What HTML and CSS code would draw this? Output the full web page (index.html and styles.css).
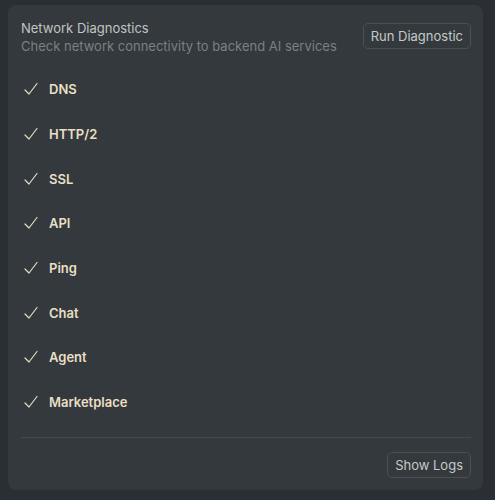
FILE: index.html
```html
<!DOCTYPE html>
<html>
<head>
<meta charset="utf-8">
<link rel="stylesheet" href="styles.css">
</head>
<body>
<div class="card">
  <div class="header">
    <div class="titles">
      <div class="title">Network Diagnostics</div>
      <div class="subtitle">Check network connectivity to backend AI services</div>
    </div>
    <button class="btn">Run Diagnostic</button>
  </div>
  <ul class="checks">
    <li class="row"><svg class="check" viewBox="0 0 14 14"><path d="M1 8 L5 12 L13 1.5"/></svg><span>DNS</span></li>
    <li class="row"><svg class="check" viewBox="0 0 14 14"><path d="M1 8 L5 12 L13 1.5"/></svg><span>HTTP/2</span></li>
    <li class="row"><svg class="check" viewBox="0 0 14 14"><path d="M1 8 L5 12 L13 1.5"/></svg><span>SSL</span></li>
    <li class="row"><svg class="check" viewBox="0 0 14 14"><path d="M1 8 L5 12 L13 1.5"/></svg><span>API</span></li>
    <li class="row"><svg class="check" viewBox="0 0 14 14"><path d="M1 8 L5 12 L13 1.5"/></svg><span>Ping</span></li>
    <li class="row"><svg class="check" viewBox="0 0 14 14"><path d="M1 8 L5 12 L13 1.5"/></svg><span>Chat</span></li>
    <li class="row"><svg class="check" viewBox="0 0 14 14"><path d="M1 8 L5 12 L13 1.5"/></svg><span>Agent</span></li>
    <li class="row"><svg class="check" viewBox="0 0 14 14"><path d="M1 8 L5 12 L13 1.5"/></svg><span>Marketplace</span></li>
  </ul>
  <div class="footer">
    <button class="btn">Show Logs</button>
  </div>
</div>
</body>
</html>
```
FILE: styles.css
```css
html, body {
  margin: 0;
  padding: 0;
  background: #2a2f35;
}
body {
  width: 495px;
  height: 500px;
  padding: 5px 12px 0 8px;
  box-sizing: border-box;
  font-family: Inter, "Noto Sans", sans-serif;
  font-size: 13px;
}
.card {
  background: #33393d;
  border-radius: 8px;
  height: 485px;
  box-sizing: border-box;
  padding: 14px 12px 0 13px;
}
.header {
  display: flex;
  justify-content: space-between;
  align-items: flex-start;
}
.title {
  color: #c2c5c5;
  line-height: 18px;
}
.subtitle {
  color: #7b8084;
  line-height: 18px;
}
.btn {
  font-family: inherit;
  font-size: 13px;
  color: #c6c9c8;
  background: transparent;
  border: 1px solid #4a5054;
  border-radius: 5px;
  height: 26px;
  padding: 0 7px;
  margin-top: 4px;
  line-height: 24px;
}
.checks {
  list-style: none;
  margin: 12px 0 0 0;
  padding: 0 0 12px 0;
  border-bottom: 1px solid #43494d;
}
.row {
  height: 44.7px;
  display: flex;
  align-items: center;
  gap: 11px;
  padding-left: 3px;
  color: #eadfc4;
  font-weight: 600;
}
.check {
  width: 14px;
  height: 14px;
  fill: none;
  stroke: #e6dcc4;
  stroke-width: 1.2;
  stroke-linecap: round;
  stroke-linejoin: round;
}
.footer {
  display: flex;
  justify-content: flex-end;
  padding-top: 14px;
}
.footer .btn {
  margin-top: 0;
}
```
